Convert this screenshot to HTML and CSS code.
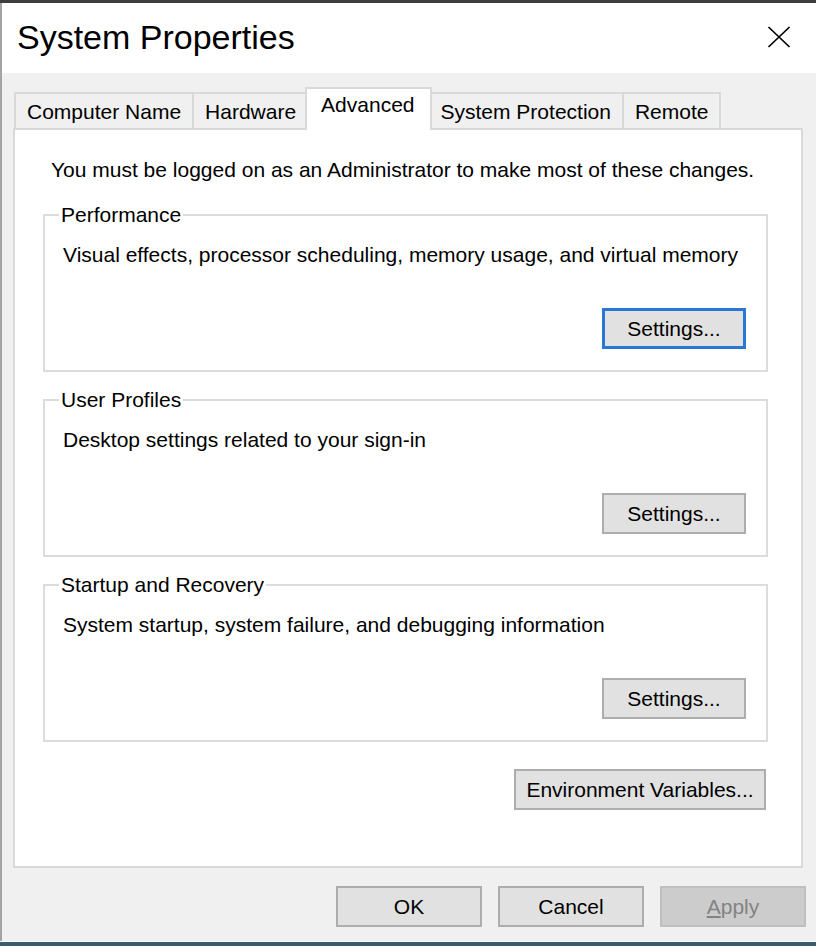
FILE: index.html
```html
<!DOCTYPE html>
<html lang="en">
<head>
<meta charset="utf-8">
<title>System Properties</title>
<link rel="stylesheet" href="styles.css">
</head>
<body>
<div class="screen">
  <div class="top-strip"></div>
  <div class="window">
    <div class="titlebar">
      <span class="title">System Properties</span>
      <span class="close" aria-label="Close">
        <svg width="24" height="22" viewBox="0 0 24 22"><path d="M1.5 1 L22.5 21 M22.5 1 L1.5 21" stroke="#000" stroke-width="1.7" fill="none"/></svg>
      </span>
    </div>
    <div class="client">
      <div class="tabs">
        <div class="tab">Computer Name</div>
        <div class="tab">Hardware</div>
        <div class="tab tab-active">Advanced</div>
        <div class="tab">System Protection</div>
        <div class="tab">Remote</div>
      </div>
      <div class="panel">
        <p class="admin">You must be logged on as an Administrator to make most of these changes.</p>
        <fieldset class="group">
          <legend>Performance</legend>
          <p class="desc">Visual effects, processor scheduling, memory usage, and virtual memory</p>
          <div class="row"><button class="btn btn-focus">Settings...</button></div>
        </fieldset>
        <fieldset class="group">
          <legend>User Profiles</legend>
          <p class="desc">Desktop settings related to your sign-in</p>
          <div class="row"><button class="btn">Settings...</button></div>
        </fieldset>
        <fieldset class="group">
          <legend>Startup and Recovery</legend>
          <p class="desc">System startup, system failure, and debugging information</p>
          <div class="row"><button class="btn">Settings...</button></div>
        </fieldset>
        <div class="row env-row"><button class="btn btn-env">Environment Variables...</button></div>
      </div>
      <div class="footer">
        <button class="btn btn-foot">OK</button>
        <button class="btn btn-foot">Cancel</button>
        <button class="btn btn-foot btn-disabled"><u>A</u>pply</button>
      </div>
    </div>
  </div>
  <div class="bottom-line"></div>
  <div class="taskbar"></div>
</div>
</body>
</html>
```

FILE: styles.css
```css
* { box-sizing: border-box; }
html, body { margin: 0; padding: 0; }
body {
  font-family: "Liberation Sans", Arial, sans-serif;
  font-size: 21px;
  color: #000;
  background: #f0f0f0;
}
.screen {
  width: 816px;
  height: 946px;
  display: flex;
  flex-direction: column;
  overflow: hidden;
}
.top-strip {
  height: 3px;
  background: #3d3d3d;
  flex: none;
}
.window {
  flex: none;
  height: 938px;
  border-left: 2px solid #a3a3a3;
  display: flex;
  flex-direction: column;
}
.titlebar {
  height: 70px;
  flex: none;
  background: #fff;
  display: flex;
  align-items: center;
  justify-content: space-between;
  padding: 0 25px 0 15px;
}
.title {
  font-size: 34px;
  line-height: 40px;
  margin-top: -2px;
}
.close {
  display: flex;
  margin-top: -2px;
}
.client {
  flex: 1;
  background: #f0f0f0;
  padding: 14px 10px 0 11px;
  display: flex;
  flex-direction: column;
}
.tabs {
  display: flex;
  align-items: flex-end;
  height: 41px;
  padding-left: 1px;
}
.tab {
  position: relative;
  height: 36px;
  line-height: 24px;
  padding: 6px 11px 0;
  border: 2px solid #d9d9d9;
  border-bottom: none;
  background: #f0f0f0;
  margin-right: -2px;
  white-space: nowrap;
}
.tab-active {
  height: 43px;
  padding: 4px 15px 0 14px;
  margin-left: -2px;
  margin-right: -4px;
  margin-bottom: -2px;
  background: #fff;
  z-index: 2;
}
.panel {
  height: 740px;
  margin-right: 3px;
  background: #fff;
  border: 2px solid #d9d9d9;
  padding: 28px 33px 0 28px;
}
p { margin: 0; line-height: 24px; }
.admin { padding-left: 8px; margin-bottom: 21px; }
.group {
  margin: 0 0 16px 0;
  border: 2px solid #dcdcdc;
  padding: 0 20px 21px 18px;
  min-width: 0;
}
.group legend {
  margin-left: -4px;
  padding: 0 2px;
  line-height: 24px;
}
.desc { margin-top: 16px; }
.row {
  display: flex;
  justify-content: flex-end;
  margin-top: 41px;
}
.btn {
  font-family: inherit;
  font-size: 21px;
  color: #000;
  background: #e1e1e1;
  border: 2px solid #adadad;
  border-radius: 0;
  height: 41px;
  width: 144px;
  padding: 0;
  line-height: 24px;
}
.btn-focus {
  border: 3px solid #2a78d6;
}
.env-row { margin-top: 27px; margin-right: 2px; }
.btn-env { width: 252px; }
.footer {
  display: flex;
  justify-content: flex-end;
  gap: 16px;
  margin-top: 18px;
}
.btn-foot { width: 146px; }
.btn-disabled {
  background: #cccccc;
  border-color: #bfbfbf;
  color: #838383;
}
.bottom-line { height: 1px; background: #fff; flex: none; }
.taskbar { height: 4px; background: #3b5b6f; flex: none; }
```
